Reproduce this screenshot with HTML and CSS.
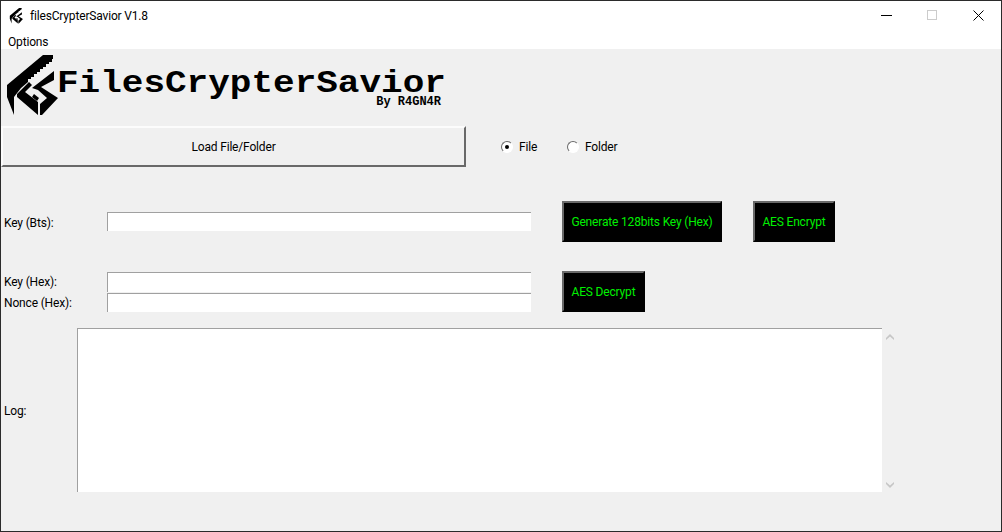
FILE: index.html
```html
<!DOCTYPE html>
<html lang="en">
<head>
<meta charset="UTF-8">
<title>filesCrypterSavior V1.8</title>
<link rel="stylesheet" href="styles.css">
</head>
<body>
<svg width="0" height="0" class="defs">
    <symbol id="logo" viewBox="0 0 52 62">
        <polygon points="36,0 46,0 46,4 45,4 45,7 42,7 42,9 39,9 39,12 36,12 36,14 33,14 33,17 30,17 30,19 27,19 27,22 24,22 24,24 21,24 21,27 14,33 7,42 7,60 0,42 0,30"/>
        <polygon points="10,42 31,60 31,47 18,37 25,30 22,27 10,39"/>
        <polygon points="47,16 47,25 34,32 51,43 35,60 33,60 33,49 40,43 31,35 25,33"/>
        <polygon points="27,39 32,43 30,46 25,42"/>
    </symbol>
</svg>
<div class="window">
    <div class="titlebar">
        <svg class="app-icon"><use href="#logo"/></svg>
        <span class="app-title">filesCrypterSavior V1.8</span>
        <div class="win-controls">
            <svg class="win-btn" viewBox="0 0 11 11"><path d="M0 5.5H11" stroke="#000"/></svg>
            <svg class="win-btn off" viewBox="0 0 11 11"><rect x=".5" y=".5" width="9" height="9" fill="none" stroke="#ccc"/></svg>
            <svg class="win-btn" viewBox="0 0 11 11"><path d="M.5 .5L10.5 10.5M10.5 .5L.5 10.5" stroke="#000"/></svg>
        </div>
    </div>
    <div class="menubar"><span>Options</span></div>

    <div class="content">
        <div class="banner">
            <svg class="logo"><use href="#logo"/></svg>
            <div class="brand">
                <div class="brand-name">FilesCrypterSavior</div>
                <div class="brand-by">By R4GN4R</div>
            </div>
        </div>

        <div class="load-row">
            <button class="load-btn">Load File/Folder</button>
            <label class="radio"><span class="dot checked"></span>File</label>
            <label class="radio"><span class="dot"></span>Folder</label>
        </div>

        <div class="row row-bts">
            <div class="field">
                <span class="field-label">Key (Bts):</span>
                <div class="input"></div>
            </div>
            <button class="hack-btn">Generate 128bits Key (Hex)</button>
            <button class="hack-btn">AES Encrypt</button>
        </div>

        <div class="row row-hex">
            <div class="stack">
                <div class="field">
                    <span class="field-label">Key (Hex):</span>
                    <div class="input"></div>
                </div>
                <div class="field">
                    <span class="field-label">Nonce (Hex):</span>
                    <div class="input"></div>
                </div>
            </div>
            <button class="hack-btn">AES Decrypt</button>
        </div>

        <div class="log-row">
            <span class="log-label">Log:</span>
            <div class="log-box"></div>
            <div class="scroll">
                <svg class="arrow" viewBox="0 0 8 6"><path d="M0 6V4L4 0L8 4V6L4 2.5Z"/></svg>
                <svg class="arrow" viewBox="0 0 8 6"><path d="M0 0V2L4 6L8 2V0L4 3.5Z"/></svg>
            </div>
        </div>
    </div>
</div>
</body>
</html>
```
FILE: styles.css
```css
* { margin:0; padding:0; box-sizing:border-box; }
body {
    font-family: Roboto, sans-serif;
    font-size: 12px;
    letter-spacing: -0.17px;
    color: #000;
    overflow: hidden;
}
.defs { position: absolute; }
.window {
    width: 1002px;
    height: 532px;
    border: 1px solid #2b2b2b;
    background: #f0f0f0;
    display: flex;
    flex-direction: column;
}

/* title + menu */
.titlebar {
    height: 29px;
    background: #fff;
    display: flex;
    align-items: center;
    padding-left: 8px;
}
.app-icon { width: 15px; height: 16px; margin-right: 6px; }
.win-controls {
    margin-left: auto;
    display: flex;
    gap: 35px;
    padding-right: 17px;
}
.win-btn { width: 11px; height: 11px; }
.menubar {
    height: 19px;
    background: #fff;
    padding: 3px 0 0 7px;
    line-height: 18px;
}

/* logo */
.banner {
    height: 77px;
    display: flex;
    padding: 6px 0 0 6px;
}
.logo { width: 52px; height: 62px; }
.brand { width: 387px; margin-left: -2px; }
.brand-name {
    font-family: "Liberation Mono", monospace;
    font-weight: bold;
    font-size: 36px;
    letter-spacing: 0;
    line-height: 26px;
    margin-top: 15px;
    transform: scaleY(0.85);
    transform-origin: 0 85%;
}
.brand-by {
    font-family: "Liberation Mono", monospace;
    font-weight: bold;
    font-size: 12px;
    letter-spacing: 0;
    line-height: 12px;
    text-align: right;
    padding-right: 3px;
}

/* load row */
.load-row { display: flex; align-items: center; height: 41px; }
.load-btn {
    width: 465px;
    height: 41px;
    background: #f0f0f0;
    border: 2px solid;
    border-color: #fcfcfc #696969 #696969 #fcfcfc;
    font: inherit;
    letter-spacing: inherit;
    margin-right: 35px;
}
.radio { display: flex; align-items: center; width: 66px; }
.radio + .radio { width: auto; }
.dot {
    width: 12px;
    height: 12px;
    border-radius: 50%;
    border: 1.5px solid;
    border-color: #6a6a6a #fff #fff #6a6a6a;
    background: #fff;
    margin-right: 6px;
    display: flex;
    align-items: center;
    justify-content: center;
}
.dot.checked::after {
    content: "";
    width: 4px;
    height: 4px;
    border-radius: 50%;
    background: #000;
}

/* form rows */
.row { display: flex; align-items: center; }
.row-bts { margin-top: 34px; height: 41px; }
.row-hex { margin-top: 29px; height: 41px; }
.field { display: flex; align-items: center; }
.field-label { width: 106px; padding: 2px 0 0 3px; }
.input {
    width: 424px;
    height: 19px;
    background: #fff;
    border-top: 1px solid #a0a0a0;
    border-left: 1px solid #a0a0a0;
}
.stack { display: flex; flex-direction: column; gap: 1px; }
.stack .field:first-child .input { height: 20px; }
.stack .field:first-child .field-label { padding-top: 0; }
.hack-btn {
    height: 41px;
    margin-left: 31px;
    padding-top: 1px;
    background: #000;
    color: #00f000;
    font: inherit;
    letter-spacing: inherit;
    white-space: nowrap;
    border: 2px solid;
    border-color: #696969 #000 #000 #696969;
}
.row-bts .hack-btn:first-of-type { width: 160px; }
.row-bts .hack-btn:last-of-type { width: 82px; }
.row-hex .hack-btn { width: 83px; }

/* log */
.log-row { display: flex; align-items: center; margin-top: 16px; }
.log-label { width: 76px; padding: 1px 0 0 3px; }
.log-box {
    width: 805px;
    height: 164px;
    background: #fff;
    border-top: 1px solid #a0a0a0;
    border-left: 1px solid #a0a0a0;
}
.scroll {
    height: 164px;
    padding: 6px 0 4px 4px;
    display: flex;
    flex-direction: column;
    justify-content: space-between;
}
.arrow { width: 8px; height: 6px; fill: #c6c6c6; display: block; }
```
